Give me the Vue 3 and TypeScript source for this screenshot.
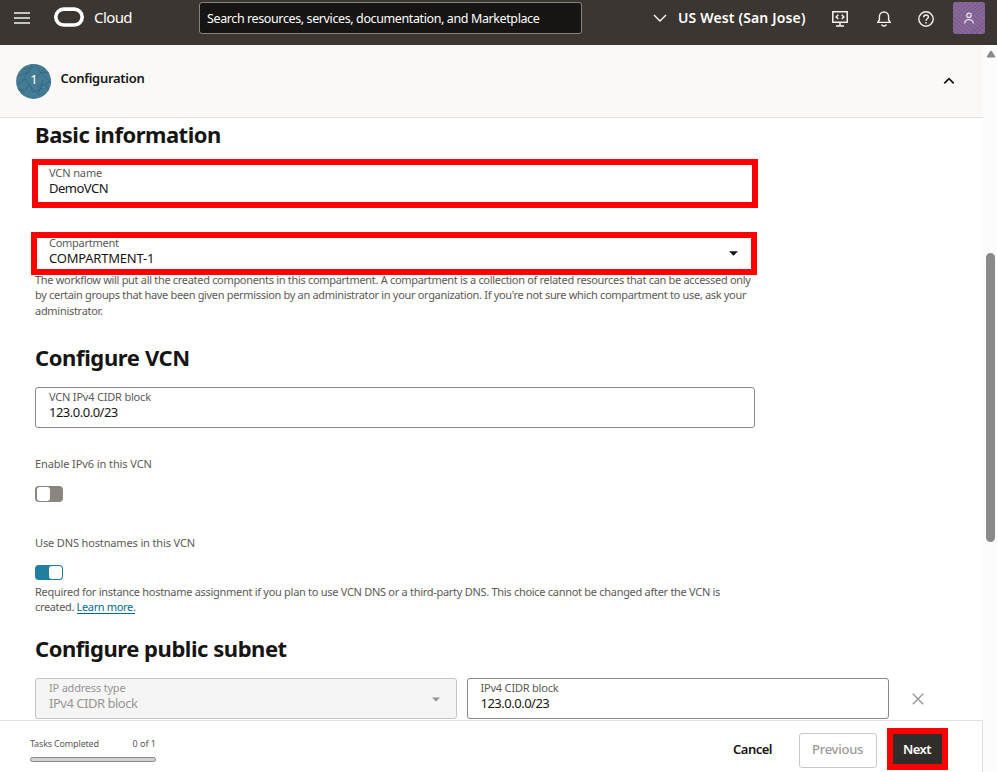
<script setup lang="ts">
import { ref } from 'vue'

const vcnName = ref('DemoVCN')
const compartment = ref('COMPARTMENT-1')
const vcnCidr = ref('123.0.0.0/23')
const subnetCidr = ref('123.0.0.0/23')
const ipv6Enabled = ref(false)
const dnsEnabled = ref(true)

const compartmentHelp: string[] = [
  'The workflow will put all the created components in this compartment. A compartment is a collection of related resources that can be accessed only',
  "by certain groups that have been given permission by an administrator in your organization. If you're not sure which compartment to use, ask your",
  'administrator.',
]
</script>

<template>
  <div class="page">
    <header class="topbar">
      <svg class="burger" width="16" height="12" viewBox="0 0 16 12"><path d="M0 1h16M0 6h16M0 11h16" stroke="#f4f2ef" stroke-width="1.4" /></svg>
      <svg class="logo" width="30" height="20" viewBox="0 0 30 20"><rect x="1.8" y="2.1" width="26.4" height="15.900" rx="7.950" fill="none" stroke="#fff" stroke-width="3.6" /></svg>
      <span class="brand"><span class="t-brand">Cloud</span></span>
      <div class="search"><span class="t-search">Search resources, services, documentation, and Marketplace</span></div>
      <svg class="region-arrow" width="14" height="9" viewBox="0 0 14 9"><path d="M1 1l6 6 6-6" fill="none" stroke="#fff" stroke-width="1.4" /></svg>
      <span class="region"><span class="t-region">US West (San Jose)</span></span>
      <svg class="ico-dev" width="16" height="16" viewBox="0 0 16 16" fill="none" stroke="#f4f2ef" stroke-width="1.5">
        <path d="M.8.8h14.4v10.400H.8zM8 11v3.800M4 15h8M6.300 3.700L4.200 5.900l2.100 2.200M9.700 3.700l2.100 2.200-2.100 2.200" />
      </svg>
      <svg class="ico-bell" width="14" height="16" viewBox="0 0 14 16" fill="none" stroke="#f4f2ef" stroke-width="1.4">
        <path d="M.8 11.4h12.4L11.600 9V5.600a4.600 4.600 0 0 0-9.200 0V9zM4.600 13.500c.7 1.900 4.100 1.900 4.800 0" />
      </svg>
      <svg class="ico-help" width="16" height="16" viewBox="0 0 16 16" fill="none" stroke="#f4f2ef" stroke-width="1.4">
        <circle cx="8" cy="8" r="7.2" />
        <path d="M5.700 6.300c0-3.100 4.700-2.900 4.700-.2C10.400 7.800 8 7.700 8 9.700M8 10.900v1.500" />
      </svg>
      <svg class="avatar" width="32" height="32" viewBox="0 0 32 32">
        <defs><clipPath id="avatar-clip"><rect width="32" height="32" rx="3" /></clipPath></defs>
        <g clip-path="url(#avatar-clip)">
          <rect width="32" height="32" fill="#89689a" />
          <path d="M0 5L6 0M0 9L11 0M0 13L16 0M5 13L21 0M10 13L26 0M14 13L31 0M19 13l13-10M23 14l9-7M27 15l5-4M0 15l21 17M0 19l16 13M0 23l11 9M0 27l6 5M4 14l22 18M9 14l23 18M14 14l18 14M19 14l13 10M24 14l8 6M17 32l15-12M22 32l10-8" stroke="#775889" stroke-width="1" />
          <g fill="none" stroke="#e5dce9" stroke-width="1.300"><circle cx="16" cy="13.300" r="2.200" /><path d="M11.700 21.500c0-5.300 8.600-5.300 8.600 0" /></g>
        </g>
      </svg>
    </header>

    <div class="body">
      <main class="main">
        <section class="step">
          <svg class="badge" width="36" height="36" viewBox="0 0 36 36">
            <defs><clipPath id="badge-clip"><circle cx="17.600" cy="18.400" r="17.500" /></clipPath></defs>
            <g clip-path="url(#badge-clip)">
              <rect width="36" height="36" fill="#437c94" />
              <path d="M0 14l12-5M8 5l7 7M12 9l-6 9M16 1l-3 8M2 22l8-6 7 13M5 31l9-9M20 2l5 8 10-1M25 10l-6 6M29 5l-4 5 9 9M21 24l14-5M27 17l-5 15M17 29l10-4M14 23l10 10M1 26l7 1M10 6l9-2M30 22l3 6" fill="none" stroke="#356a80" stroke-width="1" />
            </g>
            <text x="17.900" y="21" text-anchor="middle" class="badge-num">1</text>
          </svg>
          <h1 class="step-title"><span class="t-step">Configuration</span></h1>
          <svg class="collapse" width="12" height="8" viewBox="0 0 12 8"><path d="M1.300 6.300L6 1.700l4.700 4.600" fill="none" stroke="#161513" stroke-width="1.800" /></svg>
        </section>

        <div class="form">
          <h2 class="heading"><span class="t-h1">Basic information</span></h2>
          <div class="field marked name">
            <label><span class="t-l1">VCN name</span></label>
            <div class="value"><span class="t-v1">{{ vcnName }}</span></div>
          </div>
          <div class="field marked compartment">
            <div class="grow">
              <label><span class="t-l2">Compartment</span></label>
              <div class="value"><span class="t-v2">{{ compartment }}</span></div>
            </div>
            <svg class="caret" width="9" height="5" viewBox="0 0 9 5"><path d="M0 .3h9L4.500 4.800z" fill="#161513" /></svg>
          </div>
          <p class="help first">
            <span v-for="(line, i) in compartmentHelp" :key="i" class="line"><span :class="'t-c' + i">{{ line }}</span></span>
          </p>

          <h2 class="heading vcn"><span class="t-h2">Configure VCN</span></h2>
          <div class="field plain wide">
            <label><span class="t-l3">VCN IPv4 CIDR block</span></label>
            <div class="value"><span class="t-v3">{{ vcnCidr }}</span></div>
          </div>

          <div class="switch-label ipv6"><span class="t-s1">Enable IPv6 in this VCN</span></div>
          <button type="button" class="switch" :class="{ on: ipv6Enabled }" @click="ipv6Enabled = !ipv6Enabled"><i /></button>
          <div class="switch-label dns"><span class="t-s2">Use DNS hostnames in this VCN</span></div>
          <button type="button" class="switch short" :class="{ on: dnsEnabled }" @click="dnsEnabled = !dnsEnabled"><i /></button>
          <p class="help second">
            <span class="line"><span class="t-d0">Required for instance hostname assignment if you plan to use VCN DNS or a third-party DNS. This choice cannot be changed after the VCN is</span></span>
            <span class="line"><span class="t-d1">created. <a>Learn more.</a></span></span>
          </p>

          <h2 class="heading subnet"><span class="t-h3">Configure public subnet</span></h2>
          <div class="row">
            <div class="field plain half disabled">
              <div class="grow">
                <label><span class="t-l4">IP address type</span></label>
                <div class="value"><span class="t-v4">IPv4 CIDR block</span></div>
              </div>
              <svg class="caret" width="8" height="5" viewBox="0 0 9 5"><path d="M0 .3h9L4.500 4.800z" fill="#96938f" /></svg>
            </div>
            <div class="field plain half last">
              <label><span class="t-l5">IPv4 CIDR block</span></label>
              <div class="value"><span class="t-v3">{{ subnetCidr }}</span></div>
            </div>
            <svg class="remove" width="12" height="12" viewBox="0 0 12 12"><path d="M.8.800l10.400 10.400M11.200.800L.8 11.200" stroke="#979593" stroke-width="1.300" /></svg>
          </div>
        </div>

        <footer class="footer">
          <div class="tasks">
            <div class="tasks-row"><span class="t-t1">Tasks Completed</span><span class="t-t2">0 of 1</span></div>
            <div class="progress" />
          </div>
          <button type="button" class="btn cancel"><span class="t-b1">Cancel</span></button>
          <button type="button" class="btn previous"><span class="t-b2">Previous</span></button>
          <button type="button" class="btn next"><span class="t-b3">Next</span></button>
        </footer>
      </main>
      <aside class="scroll">
        <svg width="10" height="8" viewBox="0 0 10 8"><path d="M1.500 7.500h7q1-.3.600-1.200L6 1.200q-1-1.100-2 0L.9 6.300q-.4.900.6 1.200" fill="#8a8a8a" /></svg>
        <div class="thumb" />
      </aside>
    </div>
  </div>
</template>

<style>
body { margin: 0; overflow: hidden; background: #fff; }
</style>

<style scoped>
* { box-sizing: border-box; }
.page { width: 997px; height: 772px; display: flex; flex-direction: column; overflow: hidden; color: #161513; font-family: "Noto Sans", "Open Sans", sans-serif; }
span { white-space: nowrap; }
h1, h2, p { margin: 0; }
svg { display: block; flex: none; }

.topbar { height: 45px; flex: none; display: flex; align-items: flex-start; background: #3b3631; color: #fff; }
.burger { margin: 12px 0 0 14px; }
.logo { margin: 7px 0 0 24px; }
.brand { width: 105px; margin: 5px 0 0 10px; font-size: 15px; line-height: 24px; }
.search { width: 383px; height: 32px; margin-top: 2px; flex: none; border: 1px solid #87837f; border-radius: 3px; background: #161513; padding-left: 7px; font-size: 12.5px; line-height: 31px; }
.region-arrow { margin: 14px 0 0 71px; }
.region { width: 128px; margin: 6px 0 0 11px; font-size: 14px; font-weight: 600; line-height: 24px; }
.ico-dev { margin: 11px 0 0 26px; }
.ico-bell { margin: 11px 0 0 29px; }
.ico-help { margin: 11px 0 0 27px; }
.avatar { margin: 2px 0 0 19px; }

.body { flex: 1; min-height: 0; display: flex; }
.main { width: 983px; display: flex; flex-direction: column; }
.scroll { width: 14px; background: #fcfcfc; display: flex; flex-direction: column; align-items: center; padding: 5px 0 0 1px; }
.thumb { width: 9px; height: 289px; margin-top: 195px; border-radius: 5px; background: #8a8a8a; }

.step { height: 73px; flex: none; display: flex; background: #fbf9f8; border-bottom: 1px solid #e3e1df; }
.badge { margin: 18px 0 0 16px; }
.badge-num { fill: #fff; font-size: 13px; }
.step-title { flex: 1; margin: 22px 0 0 8.5px; font-size: 13px; font-weight: 600; line-height: 22px; }
.collapse { margin: 32px 28px 0 0; }

.form { height: 602px; flex: none; padding-left: 35px; overflow: hidden; }
.heading { height: 34px; font-size: 22px; font-weight: 700; line-height: 32px; }
.heading.vcn { margin-top: 22px; line-height: 34px; }
.heading.subnet { margin-top: 16px; line-height: 32px; }
.field { display: flex; flex-direction: column; }
.field label { display: block; height: 15px; font-size: 11px; line-height: 15px; color: #5c5956; }
.value { height: 16px; font-size: 13px; line-height: 16px; }
.grow { flex: 1; }
.marked { width: 726px; border: 6px solid #f00; }
.name { height: 49px; margin: 7px 0 0 -3px; padding: 0 0 0 11px; }
.compartment { height: 43px; margin: 24px 0 0 -4px; padding: 0 13px 0 12px; flex-direction: row; }
.compartment .caret { margin-top: 13px; }
.compartment .grow { margin-top: -3px; }
.plain { height: 41px; border: 1px solid #8b8783; border-radius: 3px; padding: 1px 0 0 13px; }
.wide { width: 720px; margin-top: 13px; }
.half { width: 422px; flex: none; }
.half.last { padding-left: 12.5px; }
.disabled { flex-direction: row; background: #f5f5f5; border-color: #c5c4c3; padding-right: 16px; }
.disabled .value, .disabled label { color: #979593; }
.disabled .caret { margin-top: 17px; }
.row { display: flex; gap: 10px; margin-top: 12px; }
.remove { margin: 15px 0 0 13px; }

.help { font-size: 11px; color: #5c5956; }
.line { display: block; height: 15px; line-height: 15px; }
.help.first { height: 46px; margin-top: -3px; }
.help.first .line:nth-child(2) { height: 16px; }
.help.second { height: 32px; margin-top: 4px; }
.help a { color: #006b8f; border-bottom: 1px solid #006b8f; display: inline-block; line-height: 13px; }

.switch-label { height: 16px; font-size: 11px; line-height: 16px; color: #5c5956; }
.ipv6 { margin-top: 28px; }
.dns { margin-top: 33px; }
.switch { display: flex; width: 28px; height: 16px; margin-top: 14px; padding: 1px; border: 0; border-radius: 4px; background: #8a857f; }
.switch i { display: block; width: 13px; height: 14px; border-radius: 3px; background: #fff; margin-left: 1px; }
.switch.short { height: 15px; }
.switch.short i { height: 13px; }
.switch.on { background: #227e9e; justify-content: flex-end; }
.switch.on i { margin: 0; }

.footer { flex: 1; display: flex; align-items: flex-start; border-top: 1px solid #e3e1df; border-right: 1px solid #e3e1df; background: #fff; }
.tasks { width: 126px; margin: 16px 0 0 30px; }
.tasks-row { display: flex; justify-content: space-between; height: 14px; font-size: 9px; line-height: 14px; color: #5c5956; }
.progress { height: 5px; margin-top: 6px; border: 1px solid #8b8783; border-radius: 3px; background: #d5d3d1; }
.btn { padding: 0; border: 0; background: none; font-family: inherit; font-size: 13px; font-weight: 600; line-height: 20px; color: #161513; text-align: left; }
.cancel { width: 66px; height: 20px; margin: 18px 0 0 577px; }
.previous { width: 78px; height: 35px; margin-top: 12px; border: 1px solid #cac9c7; border-radius: 3px; padding: 0 0 3px 12px; color: #9b9997; font-weight: 500; }
.next { width: 61px; height: 42px; margin: 7px 0 0 10px; border: 6px solid #f00; background: #312d2a; color: #fff; padding-left: 10px; }

.t-brand { letter-spacing: -0.6px; }
.t-search { letter-spacing: -0.39px; }
.t-region { letter-spacing: 0.15px; }
.t-step { letter-spacing: -0.3px; }
.t-h1 { letter-spacing: -0.5px; }
.t-h2 { letter-spacing: -0.38px; }
.t-h3 { letter-spacing: -0.46px; }
.t-l1 { letter-spacing: -0.12px; }
.t-v1 { letter-spacing: -0.5px; }
.t-l2 { letter-spacing: -0.27px; }
.t-v2 { letter-spacing: -0.22px; }
.t-c0 { letter-spacing: -0.312px; }
.t-c1 { letter-spacing: -0.324px; }
.t-c2 { letter-spacing: -0.29px; }
.t-l3, .t-l4, .t-l5 { letter-spacing: -0.2px; }
.t-v3 { letter-spacing: -0.5px; }
.t-v4 { letter-spacing: -0.48px; }
.t-s1 { letter-spacing: -0.09px; }
.t-s2 { letter-spacing: -0.14px; }
.t-d0 { letter-spacing: -0.289px; }
.t-d1 { letter-spacing: -0.35px; }
.t-t1 { letter-spacing: -0.17px; }
.t-b1 { letter-spacing: -0.5px; }
.t-b2 { letter-spacing: -0.25px; }
.t-b3 { letter-spacing: -0.6px; }
</style>
